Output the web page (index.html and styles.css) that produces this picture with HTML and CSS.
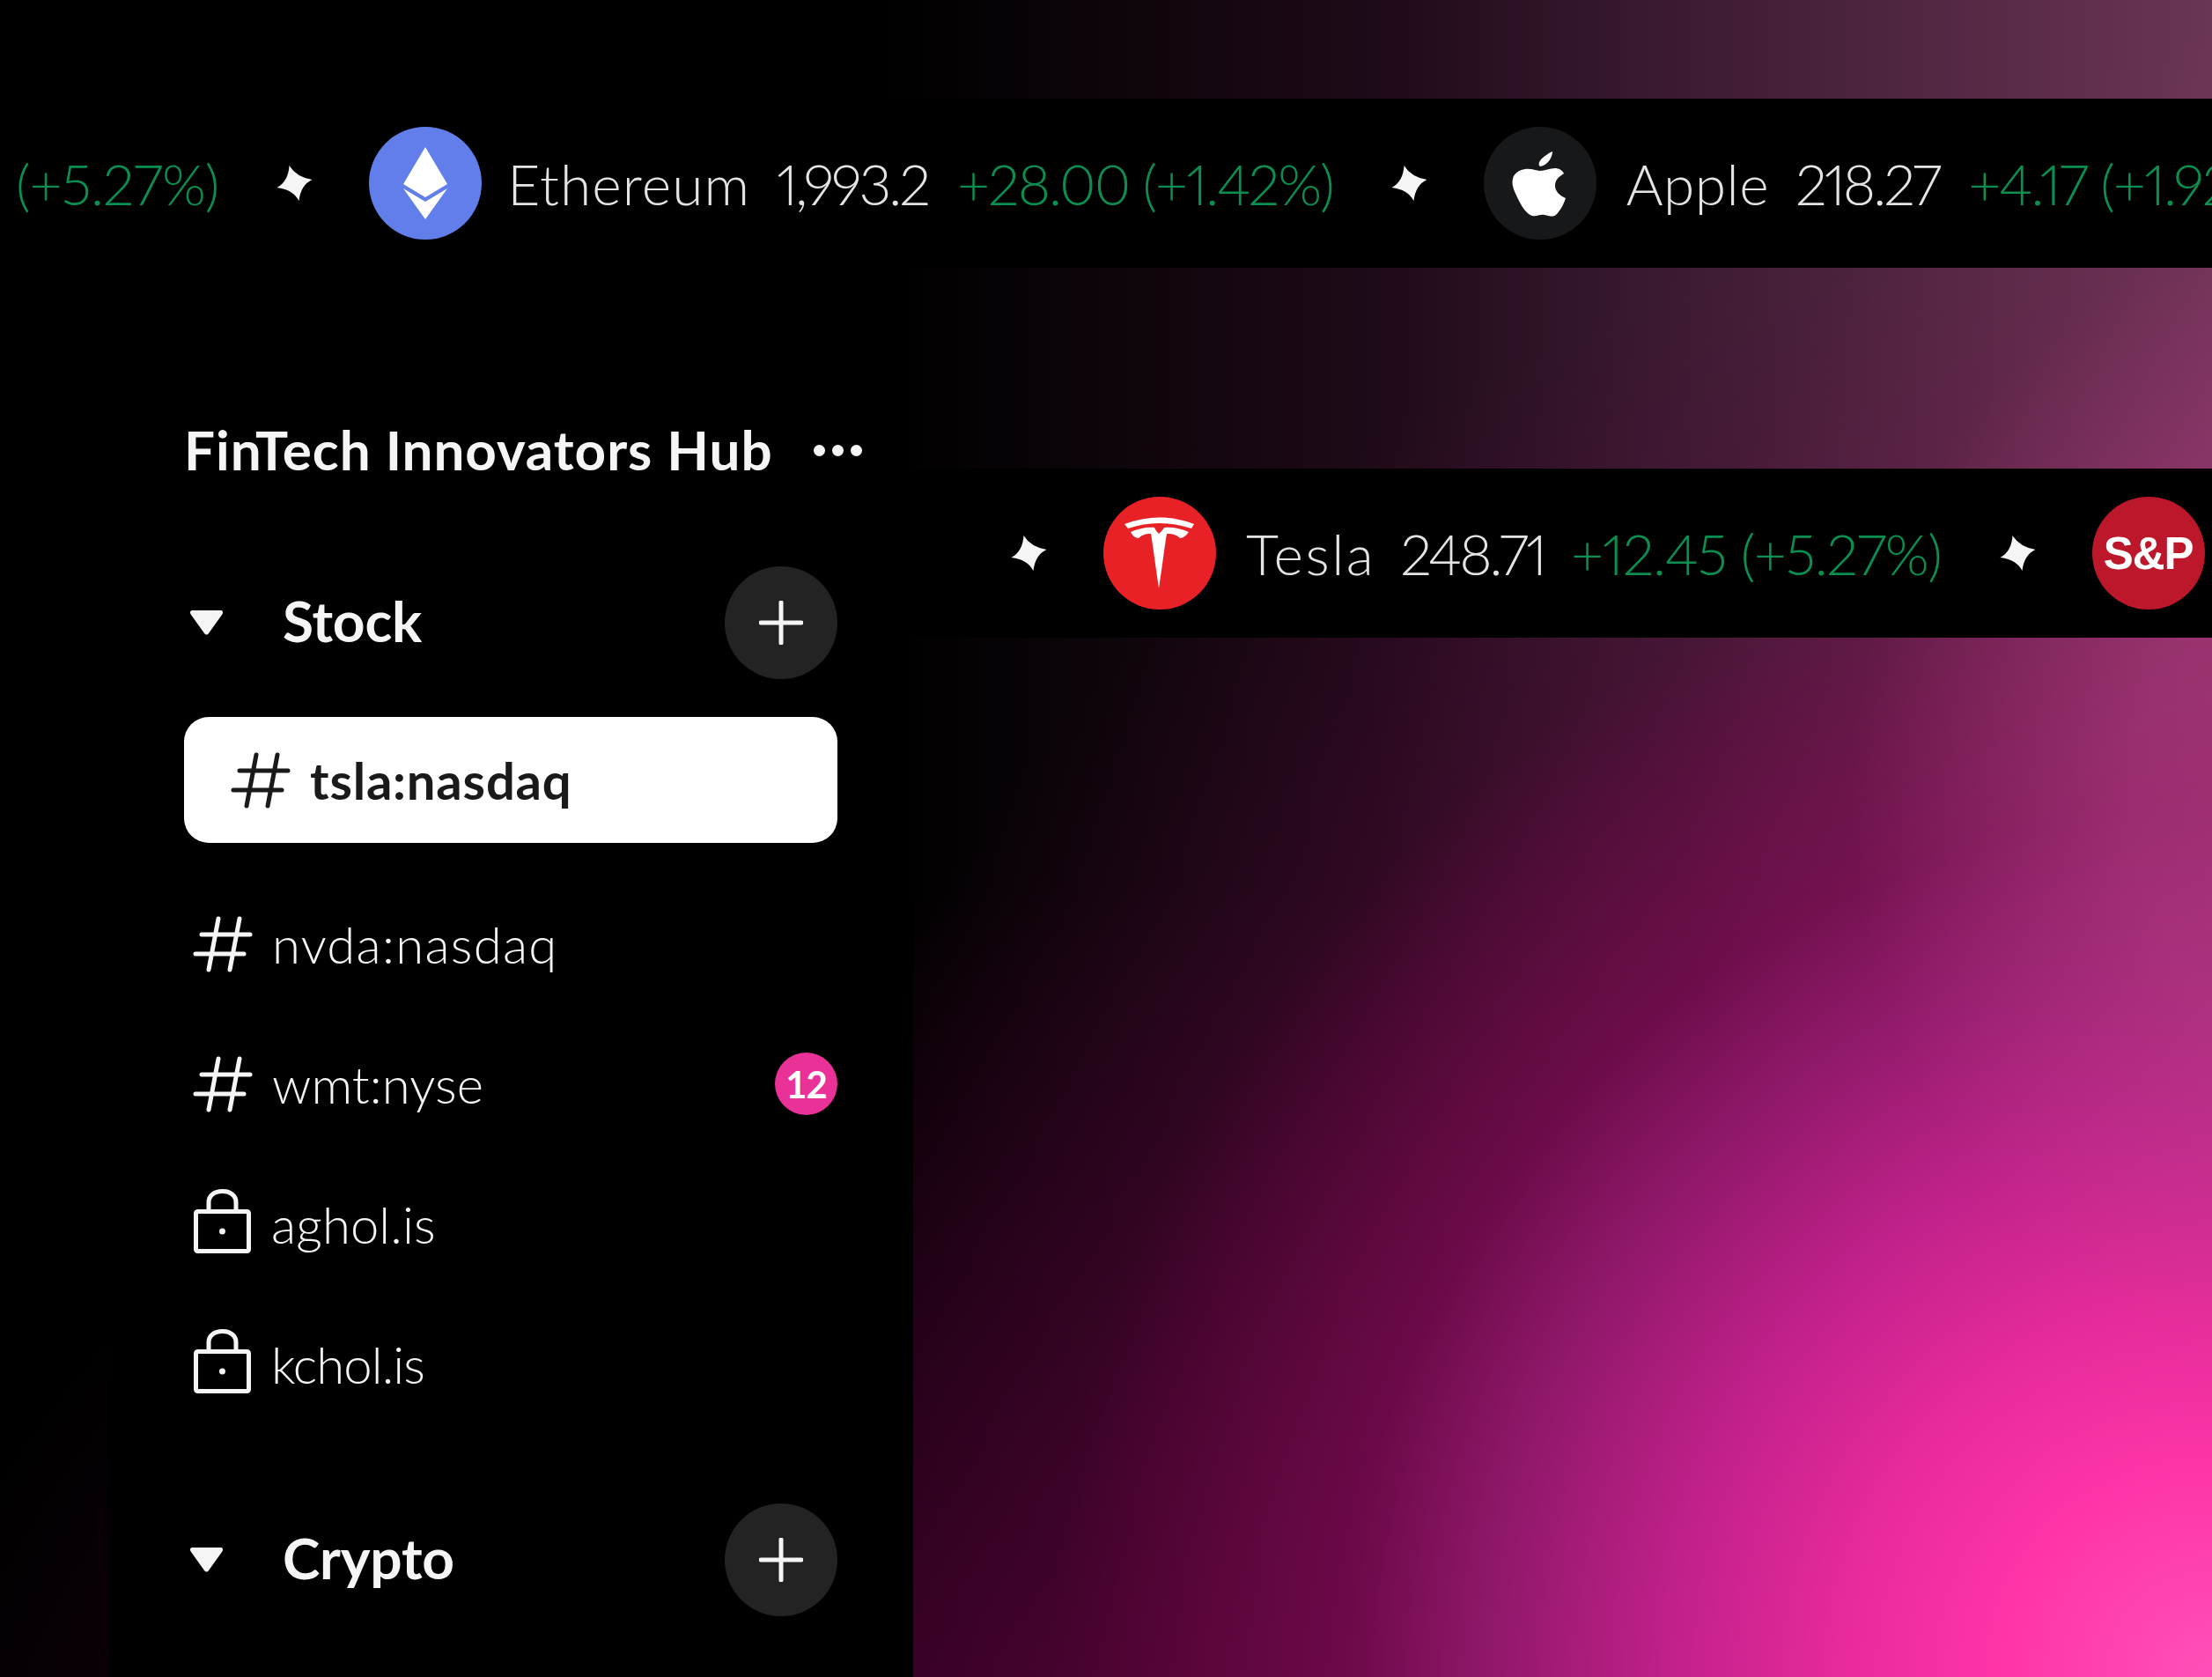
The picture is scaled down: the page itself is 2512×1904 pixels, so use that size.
FILE: index.html
```html
<!DOCTYPE html>
<html lang="en">
<head>
  <meta charset="UTF-8">
  <title>FinTech Innovators Hub</title>
  <link rel="stylesheet" href="styles.css">
</head>
<body>
  <div class="page">
    <div class="ticker ticker-top">
      <span class="change first-change">(+5.27%)</span>
      <svg class="star" viewBox="0 0 40 40"><path d="M14 0Q22 13 40 16Q27 22 25 40Q18 27 0 25Q13 18 14 0Z"/></svg>
      <span class="coin coin-eth">
        <svg viewBox="0 0 128 128"><path fill="#fff" d="M64 23L89 65L64 80L39 65Z"/><path fill="#fff" d="M39 70L64 85L89 70L64 105Z"/></svg>
      </span>
      <span class="name">Ethereum</span>
      <span class="price">1,993.2</span>
      <span class="change">+28.00 (+1.42%)</span>
      <svg class="star" viewBox="0 0 40 40"><path d="M14 0Q22 13 40 16Q27 22 25 40Q18 27 0 25Q13 18 14 0Z"/></svg>
      <span class="coin coin-apple">
        <svg viewBox="0 0 128 128"><path fill="#fff" d="M65 37C69 33 75 29 78 28C78 35 72 44 64 45C62 43 62 41 65 37ZM47 48C54 47 59 50 64 50C69 50 75 47 81 47C85 47 89 49 91 53C85 57 81 60 81 67C81 73 86 78 93 81C90 90 86 96 82 100C78 103 74 101 69 100C64 99 60 102 55 101C50 100 44 92 40 84C35 74 31 66 33 59C34 53 40 49 47 48Z"/></svg>
      </span>
      <span class="name">Apple</span>
      <span class="price">218.27</span>
      <span class="change">+4.17 (+1.92%)</span>
    </div>

    <div class="content">
      <div class="sidebar">
        <div class="hub-title">
          <span>FinTech Innovators Hub</span>
          <span class="dots"><i></i><i></i><i></i></span>
        </div>

        <div class="group-head">
          <svg class="caret" viewBox="0 0 37 28"><path d="M3 0H34C37 0 38 2 36 5L21 26C19.500 28 17.500 28 16 26L1 5C-1 2 0 0 3 0Z"/></svg>
          <span class="group-name">Stock</span>
          <button class="add-btn"><svg viewBox="0 0 50 50"><path d="M25 2V48M2 25H48"/></svg></button>
        </div>

        <div class="channel active">
          <svg class="hash" viewBox="0 0 70 64"><path d="M30 3L19 61M54 3L43 61M11 21H66M4 43H59"/></svg>
          <span>tsla:nasdaq</span>
        </div>
        <div class="channel first">
          <svg class="hash" viewBox="0 0 70 64"><path d="M30 3L19 61M54 3L43 61M11 21H66M4 43H59"/></svg>
          <span>nvda:nasdaq</span>
        </div>
        <div class="channel">
          <svg class="hash" viewBox="0 0 70 64"><path d="M30 3L19 61M54 3L43 61M11 21H66M4 43H59"/></svg>
          <span>wmt:nyse</span>
          <span class="badge">12</span>
        </div>
        <div class="channel">
          <svg class="lock" viewBox="0 0 65 73"><path d="M17 25V15C17 7 24 2.500 32.500 2.500C41 2.500 48 7 48 15V25"/><rect x="2.500" y="25.500" width="60" height="45" rx="2"/><circle cx="32.500" cy="48" r="3.500"/></svg>
          <span>aghol.is</span>
        </div>
        <div class="channel narrow">
          <svg class="lock" viewBox="0 0 65 73"><path d="M17 25V15C17 7 24 2.500 32.500 2.500C41 2.500 48 7 48 15V25"/><rect x="2.500" y="25.500" width="60" height="45" rx="2"/><circle cx="32.500" cy="48" r="3.500"/></svg>
          <span>kchol.is</span>
        </div>

        <div class="group-head group-crypto">
          <svg class="caret" viewBox="0 0 37 28"><path d="M3 0H34C37 0 38 2 36 5L21 26C19.500 28 17.500 28 16 26L1 5C-1 2 0 0 3 0Z"/></svg>
          <span class="group-name">Crypto</span>
          <button class="add-btn"><svg viewBox="0 0 50 50"><path d="M25 2V48M2 25H48"/></svg></button>
        </div>
      </div>

      <div class="main">
        <div class="ticker ticker-main">
          <svg class="star" viewBox="0 0 40 40"><path d="M14 0Q22 13 40 16Q27 22 25 40Q18 27 0 25Q13 18 14 0Z"/></svg>
          <span class="coin coin-tesla">
            <svg viewBox="0 0 128 128"><path fill="#fff" d="M24 31C50 21 78 21 103 31L100 36C76 28 51 28 28 36Z"/><path fill="#fff" d="M31 40C40 36 50 34 58 35C59 37 60 39 63 42C66 39 68 37 69 35C78 34 88 36 97 40C94 44 91 47 87 47C84 44 80 42 72 42C69 60 66 85 63 104C60 85 57 60 54 42C47 42 43 44 40 47C36 47 33 44 31 40Z"/></svg>
          </span>
          <span class="name">Tesla</span>
          <span class="price">248.71</span>
          <span class="change">+12.45 (+5.27%)</span>
          <svg class="star" viewBox="0 0 40 40"><path d="M14 0Q22 13 40 16Q27 22 25 40Q18 27 0 25Q13 18 14 0Z"/></svg>
          <span class="coin coin-sp">S&amp;P</span>
        </div>
      </div>
    </div>
  </div>
</body>
</html>
```

FILE: styles.css
```css
* {
  box-sizing: border-box;
}

body {
  margin: 0;
  background: #000;
  font-family: "Lato", "Liberation Sans", sans-serif;
}

.page {
  width: 2512px;
  height: 1904px;
  overflow: hidden;
  padding-top: 112px;
  display: flex;
  flex-direction: column;
  background:
    radial-gradient(800px 900px at 2700px 900px, rgba(190, 70, 140, 0.65) 0%, rgba(190, 70, 140, 0.52) 35%, rgba(190, 70, 140, 0.06) 75%, rgba(190, 70, 140, 0) 100%),
    radial-gradient(circle 2000px at 2512px 1904px, #ff50b8 0%, #ff34a9 12%, #e82a9c 21%, #c0208a 31%, #90186a 41%, rgba(120, 10, 80, 0.82) 49%, rgba(110, 5, 70, 0.45) 61%, rgba(100, 5, 65, 0.25) 66%, rgba(100, 5, 65, 0) 85%),
    radial-gradient(1500px 1300px at 1300px 2300px, rgba(90, 0, 60, 0.85) 0%, rgba(90, 0, 60, 0.55) 35%, rgba(90, 0, 60, 0.16) 78%, rgba(90, 0, 60, 0) 100%),
    linear-gradient(90deg, #000 40%, #1e0a18 62%, #3a1a30 75%, #6b3555 100%);
}

/* ticker strips */
.ticker {
  height: 192px;
  background: #000;
  display: flex;
  align-items: center;
  overflow: hidden;
  white-space: nowrap;
  flex-shrink: 0;
}

.ticker-top {
  padding-left: 18px;
}

.ticker-main {
  padding-left: 45px;
}

.star {
  width: 41px;
  height: 40px;
  fill: #f5f5f5;
  flex-shrink: 0;
  margin: 0 64px 0 66px;
}

.coin {
  width: 128px;
  height: 128px;
  border-radius: 50%;
  display: flex;
  align-items: center;
  justify-content: center;
  flex-shrink: 0;
}

.coin svg {
  width: 128px;
  height: 128px;
}

.coin-eth { background: #627eea; }
.coin-apple { background: #17181a; }
.coin-tesla { background: #e82127; }

.coin-sp {
  background: #bd172b;
  color: #fff;
  font-family: "Liberation Sans", sans-serif;
  font-weight: 700;
  font-size: 51px;
  letter-spacing: -1px;
}

.name,
.price,
.change {
  font-size: 64px;
  font-weight: 300;
  font-variant-numeric: proportional-nums;
}

.name {
  color: #e4e4e4;
  letter-spacing: 0.5px;
  margin-left: 34px;
}

.coin-eth + .name {
  letter-spacing: 1.1px;
  margin-left: 29px;
}

.coin-tesla + .name {
  letter-spacing: 2.5px;
}

.price {
  color: #e4e4e4;
  letter-spacing: -3px;
  margin-left: 30px;
}

.change {
  color: #0a8f50;
  letter-spacing: -2px;
  margin-left: 33px;
}

.first-change {
  letter-spacing: -1px;
  margin-left: 0;
}

.ticker-main .price {
  margin-left: 28px;
}

.ticker-main .change {
  letter-spacing: -1.3px;
  margin-left: 30px;
}

/* sidebar and main area */
.content {
  flex: 1;
  display: flex;
  margin-left: 124px;
  min-height: 0;
}

.sidebar {
  width: 913px;
  background: #000;
  padding: 170px 86px 0 85px;
  color: #f5f5f5;
  flex-shrink: 0;
}

.main {
  flex: 1;
  min-width: 0;
  padding-top: 228px;
}

.hub-title {
  display: flex;
  align-items: center;
  gap: 46px;
  height: 72px;
  font-size: 62px;
  font-weight: 700;
  letter-spacing: 0.95px;
  white-space: nowrap;
}

.dots {
  display: flex;
  gap: 8px;
  margin-top: 2px;
}

.dots i {
  width: 13px;
  height: 13px;
  border-radius: 50%;
  background: #f5f5f5;
}

.group-head {
  display: flex;
  align-items: center;
  margin-top: 97px;
  height: 128px;
}

.caret {
  width: 37px;
  height: 28px;
  fill: #f5f5f5;
  margin-left: 7px;
  flex-shrink: 0;
}

.group-name {
  font-size: 64px;
  font-weight: 700;
  letter-spacing: -0.2px;
  margin: -5px 0 0 68px;
}

.add-btn {
  margin-left: auto;
  width: 128px;
  height: 128px;
  border-radius: 50%;
  border: none;
  background: #232323;
  display: flex;
  align-items: center;
  justify-content: center;
  padding: 0;
}

.add-btn svg {
  width: 50px;
  height: 50px;
  fill: none;
  stroke: #f5f5f5;
  stroke-width: 5;
  stroke-linecap: round;
}

.channel {
  display: flex;
  align-items: center;
  height: 143px;
  margin-top: 16px;
  padding-left: 9px;
  font-size: 58px;
  font-weight: 300;
  letter-spacing: 0.1px;
  color: #f5f5f5;
}

.channel.active {
  margin-top: 43px;
  padding-left: 52px;
  background: #fff;
  border-radius: 28px;
  color: #1a1a1a;
  font-weight: 700;
  letter-spacing: 0.8px;
}

.channel.first {
  margin-top: 43px;
  letter-spacing: 1.3px;
}

.channel.narrow {
  letter-spacing: -0.9px;
}

.hash {
  width: 70px;
  height: 64px;
  fill: none;
  stroke: currentColor;
  stroke-width: 5;
  stroke-linecap: round;
  flex-shrink: 0;
  margin-right: 21px;
}

.lock {
  width: 65px;
  height: 73px;
  fill: none;
  stroke: currentColor;
  stroke-width: 5;
  flex-shrink: 0;
  margin: -6px 23px 0 2px;
}

.lock circle {
  fill: currentColor;
  stroke: none;
}

.badge {
  margin-left: auto;
  width: 71px;
  height: 71px;
  border-radius: 50%;
  background: #ea3198;
  color: #fff;
  font-size: 42px;
  font-weight: 700;
  letter-spacing: -1px;
  display: flex;
  align-items: center;
  justify-content: center;
}

.group-crypto {
  margin-top: 87px;
}
```
